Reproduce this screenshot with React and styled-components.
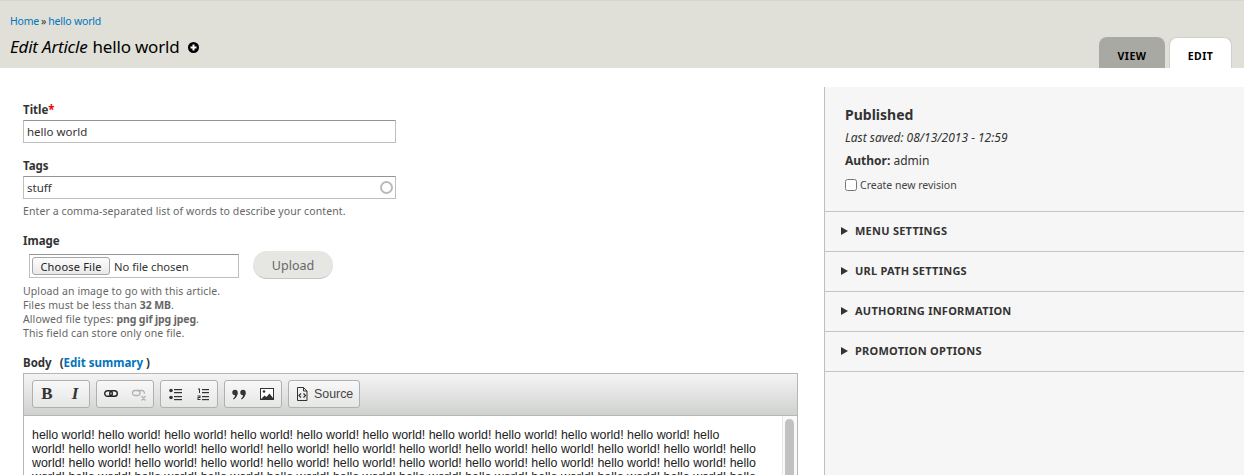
import React from "react";
import styled, { createGlobalStyle } from "styled-components";

const Global = createGlobalStyle`
  html, body { margin: 0; padding: 0; background: #fff; overflow: hidden; }
  * { box-sizing: border-box; }
`;
const FONT = `"Noto Sans", "Open Sans", sans-serif`;

const Page = styled.div`
  width: 1244px; height: 475px; overflow: hidden;
  font-family: ${FONT}; color: #333; font-size: 12px;
`;
const Header = styled.header`
  height: 68px; background: #e0e0d8; border-top: 1px solid #d6d6ce;
  padding: 13px 0 0 10px;
  display: flex; justify-content: space-between;
`;
const HeaderText = styled.div`display: flex; flex-direction: column;`;
const Breadcrumb = styled.div`
  font-size: 10.5px; line-height: 14px; color: #333; letter-spacing: -0.2px;
  display: flex; gap: 2px;
`;
const Link = styled.a`color: #0074bd; text-decoration: none;`;
const PageTitle = styled.h1`
  margin: 7px 0 0; font-size: 17px; font-weight: 400; line-height: 24px; color: #000;
  display: flex; align-items: center; letter-spacing: -0.2px;
  em { font-style: italic; margin-right: 5px; }
`;
const Shortcut = styled.svg`width: 11px; height: 11px; margin-left: 9px; margin-top: 1px;`;
const Tabs = styled.nav`display: flex; gap: 4px; align-items: flex-end; padding-right: 12px;`;
const Tab = styled.a`
  display: flex; align-items: center; justify-content: center;
  height: 31px; width: ${p => p.$w}px; border-radius: 8px 8px 0 0;
  font-size: 10.5px; font-weight: 700; letter-spacing: 0.5px; color: #000;
  padding-top: 6px;
  background: ${p => (p.$active ? "#fff" : "#a9a9a3")};
  border: ${p => (p.$active ? "1px solid #d0d0c8" : "none")};
  border-bottom: none;
`;
const Main = styled.main`display: flex; align-items: flex-start;`;
const Content = styled.div`width: 824px; padding: 34px 0 0 23px; flex: none;`;
const Field = styled.div`margin-bottom: ${p => p.$mb ?? 0}px;`;
const Label = styled.label`
  display: block; font-weight: 700; font-size: 11.5px; line-height: 16px; color: #333;
  margin-bottom: 2px;
`;
const Req = styled.span`color: #e00;`;
const Paren = styled.span`margin-left: 5px;`;
const InputWrap = styled.div`position: relative; width: 373px;`;
const TextInput = styled.input`
  display: block; width: 100%; height: 23px; padding: 0 3px;
  font-family: ${FONT}; font-size: 11.5px; color: #333;
  border: 1px solid #bfbfbf; border-top-color: #949494; border-radius: 0; outline: none; background: #fff;
`;
const Throbber = styled.span`
  position: absolute; right: 3px; top: 5px; width: 13px; height: 13px;
  border: 2px solid #bababa; border-radius: 50%; background: #fff;
`;
const Help = styled.div`
  font-size: 10.5px; line-height: 14px; color: #666; margin-top: 5px; letter-spacing: 0.1px;
  b { font-weight: 700; letter-spacing: -0.1px; }
`;
const UploadRow = styled.div`display: flex; align-items: flex-start; gap: 14px; padding-left: 6px;`;
const FileBox = styled.div`
  width: 210px; height: 24px; margin-top: 3px; border: 1px solid #bfbfbf; border-top-color: #949494;
  display: flex; align-items: center; padding-left: 2px; gap: 4px; font-size: 11.2px; color: #333;
`;
const ChooseBtn = styled.button`
  height: 18px; width: 78px; padding: 0; font-family: ${FONT}; font-size: 11px; letter-spacing: 0.2px; color: #222;
  background: linear-gradient(#fdfdfd, #e9e9e9); border: 1px solid #a6a6a6; border-radius: 3px;
`;
const Upload = styled.button`
  width: 80px; height: 28px; border-radius: 14px; border: none; border-bottom: 1px solid #c4c4c4;
  background: #e6e6e3; color: #666; font-family: ${FONT}; font-size: 12.5px; padding: 2px 0 0;
`;
const Editor = styled.div`width: 775px; border: 1px solid #b6b6b6;`;
const Toolbar = styled.div`
  height: 42px; padding: 6px 8px; display: flex; gap: 6px;
  background: linear-gradient(#f4f4f4, #cfd1cf); border-bottom: 1px solid #b6b6b6;
`;
const Group = styled.div`
  height: 28px; width: ${p => p.$w ?? 58}px; border: 1px solid #b0b0b0; border-radius: 3px;
  background: linear-gradient(#f8f8f8, #e6e6e6);
  display: flex; align-items: center; justify-content: center;
`;
const Glyph = styled.span`
  width: 28px; text-align: center; color: #333; font-family: "Liberation Serif", serif;
  font-size: 17px; font-weight: 700; font-style: ${p => (p.$i ? "italic" : "normal")}; line-height: 26px;
`;
const Ico = styled.svg`width: 16px; height: 16px; flex: none; margin: 0 6px;`;
const SourceIco = styled.svg`width: 16px; height: 16px; flex: none;`;
const SourceLabel = styled.span`font-family: "Liberation Sans", Arial, sans-serif; font-size: 12.4px; color: #444;`;
const SourceGroup = styled(Group)`justify-content: flex-start; gap: 4px; padding: 0 0 0 5px;`;
const EditArea = styled.div`display: flex; background: #fff; height: 70px;`;
const EditText = styled.div`
  flex: none; padding: 12px 0 0 8px;
  font-family: "Liberation Sans", Arial, sans-serif; font-size: 12.4px; line-height: 14px; color: #222;
`;
const EditLine = styled.div`white-space: nowrap;`;
const Scroll = styled.div`
  margin-left: auto; width: 15px; border-left: 1px solid #e8e8e8; padding: 3px 2px 0 2px; background: #fafafa;
`;
const Thumb = styled.div`height: 70px; width: 9px; background: #c2c2c2; border-radius: 5px;`;
const Side = styled.aside`
  flex: 1; margin-top: 19px; height: 400px; background: #f6f6f6; border-left: 1px solid #bfbfbf;
`;
const Meta = styled.div`
  height: 125px; padding: 18px 0 0 20px; border-bottom: 1px solid #c4c4c4;
`;
const MetaTitle = styled.h2`margin: 0; font-size: 14px; line-height: 20px; font-weight: 700; color: #333;`;
const Saved = styled.div`font-style: italic; font-size: 12px; line-height: 16px; margin-top: 5px; color: #333;`;
const Author = styled.div`
  font-size: 12px; line-height: 16px; margin-top: 7px; b { font-weight: 700; }
`;
const Revision = styled.label`
  display: flex; align-items: center; gap: 3px; margin-top: 8px; font-size: 10.5px; line-height: 16px; color: #444;
`;
const Check = styled.input`
  width: 12px; height: 12px; margin: 0; flex: none; accent-color: #ddd;
`;
const Pane = styled.div`
  height: 40px; border-bottom: 1px solid #c4c4c4; display: flex; align-items: center; padding: 0 0 2px 16px; gap: 7px;
  font-size: 11px; font-weight: 700; letter-spacing: 0.25px; color: #333; text-transform: uppercase;
`;
const Arrow = styled.span`
  width: 0; height: 0; border-left: 7px solid #333; border-top: 4px solid transparent; border-bottom: 4px solid transparent;
`;

const ten = Array(10).fill("hello world!").join(" ");
const lines = [`${ten} hello`, `world! ${ten} hello`, `world! ${ten} hello`, `world! ${ten} hello`];

export default function App() {
  return (
    <Page>
      <Global />
      <Header>
        <HeaderText>
          <Breadcrumb><Link>Home</Link><span>»</span><Link>hello world</Link></Breadcrumb>
          <PageTitle>
            <em>Edit Article</em> hello world
            <Shortcut viewBox="0 0 11 11">
              <circle cx="5.5" cy="5.5" r="5.5" fill="#000" />
              <path d="M5.5 2.5v6M2.5 5.5h6" stroke="#fff" strokeWidth="2" />
            </Shortcut>
          </PageTitle>
        </HeaderText>
        <Tabs>
          <Tab $w={66}>VIEW</Tab>
          <Tab $w={63} $active>EDIT</Tab>
        </Tabs>
      </Header>
      <Main>
        <Content>
          <Field $mb={15}>
            <Label>Title<Req>*</Req></Label>
            <InputWrap><TextInput readOnly value="hello world" /></InputWrap>
          </Field>
          <Field $mb={15}>
            <Label>Tags</Label>
            <InputWrap><TextInput readOnly value="stuff" /><Throbber /></InputWrap>
            <Help>Enter a comma-separated list of words to describe your content.</Help>
          </Field>
          <Field $mb={15}>
            <Label>Image</Label>
            <UploadRow>
              <FileBox><ChooseBtn>Choose File</ChooseBtn>No file chosen</FileBox>
              <Upload>Upload</Upload>
            </UploadRow>
            <Help>
              Upload an image to go with this article.<br />
              Files must be less than <b>32 MB</b>.<br />
              Allowed file types: <b>png gif jpg jpeg</b>.<br />
              This field can store only one file.
            </Help>
          </Field>
          <Field>
            <Label>Body <Paren>(<Link>Edit summary</Link> )</Paren></Label>
            <Editor>
              <Toolbar>
                <Group><Glyph>B</Glyph><Glyph $i>I</Glyph></Group>
                <Group>
                  <Ico viewBox="0 0 16 16" fill="none" stroke="#222" strokeWidth="1.4">
                    <rect x="1.7" y="4.7" width="7.6" height="5.6" rx="2.8" />
                    <rect x="6.7" y="4.7" width="7.6" height="5.6" rx="2.8" />
                  </Ico>
                  <Ico viewBox="0 0 16 16" fill="none" stroke="#b4b4b4" strokeWidth="1.3">
                    <rect x="1.5" y="4.5" width="7.5" height="5" rx="2.5" />
                    <path d="M6.5 4.5h4.5a2.5 2.5 0 0 1 2.3 3.2M10.5 10l4 4.5M14.5 10l-4 4.5" />
                  </Ico>
                </Group>
                <Group>
                  <Ico viewBox="0 0 16 16" fill="#333">
                    <circle cx="4" cy="4.5" r="1.8" /><circle cx="4" cy="11.5" r="1.8" />
                    <rect x="7" y="3" width="8" height="1.2" /><rect x="7" y="6" width="8" height="1.2" />
                    <rect x="7" y="10" width="8" height="1.2" /><rect x="7" y="13" width="8" height="1.2" />
                  </Ico>
                  <Ico viewBox="0 0 16 16" fill="#333">
                    <path d="M3 2.5h2v4.5H4V3.5H3z" />
                    <path d="M2.5 9.5h3V12H3.5v1H5.5v1h-3v-3h2v-.5h-2z" />
                    <rect x="7" y="3" width="7" height="1.2" /><rect x="7" y="6" width="7" height="1.2" />
                    <rect x="7" y="10" width="7" height="1.2" /><rect x="7" y="13" width="7" height="1.2" />
                  </Ico>
                </Group>
                <Group>
                  <Ico viewBox="0 0 16 16" fill="#333">
                    <circle cx="4" cy="6.5" r="2.7" /><path d="M6.7 6.5c0 3.5-1.8 5.5-4 7l-.6-.9c1.2-.9 2-2.2 2-3.8z" />
                    <circle cx="12" cy="6.5" r="2.7" /><path d="M14.7 6.5c0 3.5-1.8 5.5-4 7l-.6-.9c1.2-.9 2-2.2 2-3.8z" />
                  </Ico>
                  <Ico viewBox="0 0 16 16">
                    <rect x="1.5" y="2.5" width="13" height="11" fill="#fff" stroke="#333" />
                    <circle cx="5" cy="5.5" r="1.3" fill="#333" />
                    <path d="M2 13l3.5-3.5 2 1.5 3-3.5 3.5 4.5v1z" fill="#333" />
                  </Ico>
                </Group>
                <SourceGroup $w={72}>
                  <SourceIco viewBox="0 0 16 16" fill="none" stroke="#333">
                    <path d="M3.5 1.5h6l3.5 3.5v9.5h-9.5zM9.5 1.5V5H13" />
                    <path d="M7 7.5L5 9.5l2 2M9.5 7.5l2 2-2 2" strokeWidth="1.2" />
                  </SourceIco>
                  <SourceLabel>Source</SourceLabel>
                </SourceGroup>
              </Toolbar>
              <EditArea>
                <EditText>
                  {lines.map((l, i) => <EditLine key={i}>{l}</EditLine>)}
                </EditText>
                <Scroll><Thumb /></Scroll>
              </EditArea>
            </Editor>
          </Field>
        </Content>
        <Side>
          <Meta>
            <MetaTitle>Published</MetaTitle>
            <Saved>Last saved: 08/13/2013 - 12:59</Saved>
            <Author><b>Author:</b> admin</Author>
            <Revision><Check type="checkbox" />Create new revision</Revision>
          </Meta>
          <Pane><Arrow />Menu settings</Pane>
          <Pane><Arrow />URL path settings</Pane>
          <Pane><Arrow />Authoring information</Pane>
          <Pane><Arrow />Promotion options</Pane>
        </Side>
      </Main>
    </Page>
  );
}
